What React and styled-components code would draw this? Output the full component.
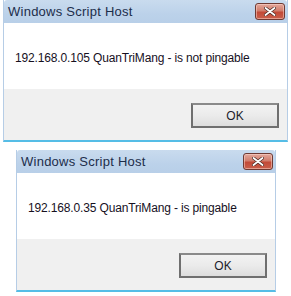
import React from 'react'
import styled, { createGlobalStyle } from 'styled-components'

const DIALOGS = [
  { message: '192.168.0.105 QuanTriMang - is not pingable', width: 285, left: 3, top: 0 },
  { message: '192.168.0.35 QuanTriMang - is pingable', width: 260, left: 16, top: 8 }
]

const GlobalStyle = createGlobalStyle`
  html, body {
    margin: 0;
    padding: 0;
    background: #ffffff;
  }
  body {
    font-family: "Liberation Sans", Arial, sans-serif;
  }
`

const CloseIcon = () => (
  <svg width="12" height="9" viewBox="0 0 12 9">
    <path d="M1.5 1 L10.5 8 M10.5 1 L1.5 8" stroke="#4a2a24" strokeWidth="3.2" strokeLinecap="round" />
    <path d="M1.5 1 L10.5 8 M10.5 1 L1.5 8" stroke="#ffffff" strokeWidth="1.8" strokeLinecap="round" />
  </svg>
)

const MessageBox = ({ message, width, left, top }) => (
  <DialogFrame $width={width} $left={left} $top={top}>
    <TitleBar>
      <Title>Windows Script Host</Title>
      <CloseButton>
        <CloseIcon />
      </CloseButton>
    </TitleBar>
    <Body>
      <Message>{message}</Message>
    </Body>
    <Footer>
      <OkButton>OK</OkButton>
    </Footer>
  </DialogFrame>
)

const App = () => (
  <Page>
    <GlobalStyle />
    {DIALOGS.map((d) => (
      <MessageBox key={d.message} {...d} />
    ))}
  </Page>
)

const Page = styled.div`
  display: flex;
  flex-direction: column;
  width: 291px;
  height: 296px;
  overflow: hidden;
`

const DialogFrame = styled.div`
  display: flex;
  flex-direction: column;
  width: ${(p) => p.$width}px;
  margin-left: ${(p) => p.$left}px;
  margin-top: ${(p) => p.$top}px;
  border-left: 1px solid #b6cde6;
  border-right: 1px solid #b6cde6;
  border-bottom: 2px solid #55bde6;
  box-sizing: border-box;
`

const TitleBar = styled.div`
  display: flex;
  align-items: flex-start;
  justify-content: space-between;
  height: 23px;
  padding: 4px 2px 0 4px;
  box-sizing: border-box;
  background: linear-gradient(180deg, #c9dbee 0%, #bcd2ea 60%, #b8cfe8 100%);
  border-radius: 3px 3px 0 0;
`

const Title = styled.span`
  font-size: 13px;
  line-height: 15px;
  color: #1c2d4a;
  letter-spacing: 0.25px;
`

const CloseButton = styled.div`
  display: flex;
  align-items: center;
  justify-content: center;
  width: 30px;
  height: 17px;
  margin-top: -1px;
  box-sizing: border-box;
  border: 1px solid #6e3a33;
  border-radius: 3px;
  background: linear-gradient(180deg, #e3a89c 0%, #d17d6c 45%, #c24a38 55%, #c9604c 100%);
  box-shadow: inset 0 0 0 1px rgba(255, 220, 210, 0.5);
`

const Body = styled.div`
  display: flex;
  align-items: center;
  height: 66px;
  padding: 4px 0 0 11px;
  box-sizing: border-box;
  background: #ffffff;
`

const Message = styled.span`
  font-size: 12px;
  letter-spacing: -0.15px;
  color: #16101e;
`

const Footer = styled.div`
  display: flex;
  justify-content: flex-end;
  align-items: flex-start;
  height: 51px;
  padding: 14px 8px 0 0;
  box-sizing: border-box;
  background: #f0f0f0;
`

const OkButton = styled.div`
  display: flex;
  align-items: center;
  justify-content: center;
  width: 88px;
  height: 25px;
  box-sizing: border-box;
  border: 2px solid #6f6f6f;
  border-top-color: #8a8a8a;
  background: linear-gradient(180deg, #f2f2f2 0%, #ebebeb 50%, #dddddd 100%);
  font-size: 12px;
  color: #1c1c2c;
`

export default App
